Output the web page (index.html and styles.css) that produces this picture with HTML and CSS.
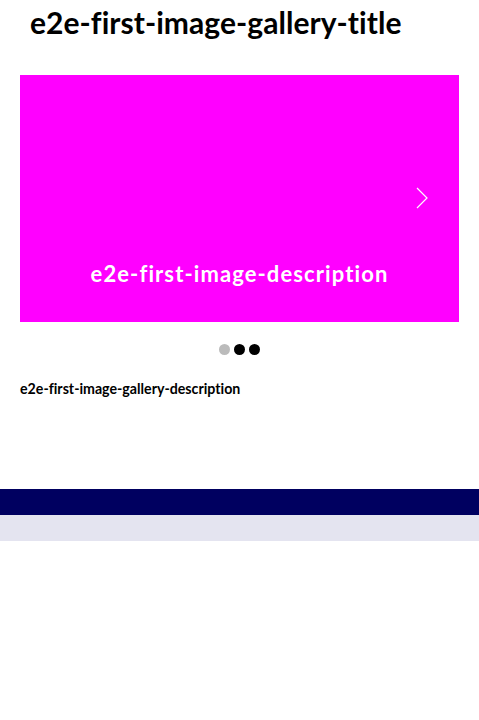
FILE: index.html
```html
<!DOCTYPE html>
<html>
<head>
<meta charset="utf-8">
<link rel="stylesheet" href="styles.css">
</head>
<body>
<main class="gallery">
  <h1 class="gallery-title">e2e-first-image-gallery-title</h1>
  <div class="slider">
    <div class="slide">
      <p class="slide-caption">e2e-first-image-description</p>
      <button class="next" aria-label="Next">
        <svg width="12" height="22" viewBox="0 0 12 22"><path d="M1 1 L11 11 L1 21" fill="none" stroke="#fff" stroke-width="1.2"/></svg>
      </button>
    </div>
  </div>
  <div class="dots">
    <span class="dot dot-active"></span>
    <span class="dot"></span>
    <span class="dot"></span>
  </div>
  <p class="gallery-desc">e2e-first-image-gallery-description</p>
</main>
<footer>
  <div class="bar-dark"></div>
  <div class="bar-light"></div>
</footer>
</body>
</html>
```
FILE: styles.css
```css
* { box-sizing: border-box; }
body {
  margin: 0;
  font-family: Lato, "Open Sans", sans-serif;
  font-variant-ligatures: none;
  color: #000;
  background: #fff;
}
.gallery {
  padding: 0 20px;
}
.gallery-title {
  margin: 0;
  padding: 5px 0 0 10px;
  height: 75px;
  font-size: 30px;
  font-weight: 700;
  line-height: 34px;
  letter-spacing: 0.05px;
}
.slider {
  height: 247px;
}
.slide {
  position: relative;
  height: 100%;
  background: #ff00ff;
  display: flex;
  align-items: flex-end;
  justify-content: center;
}
.slide-caption {
  margin: 0 0 35px;
  color: #fff;
  font-size: 22px;
  font-weight: 700;
  letter-spacing: 1.1px;
}
.next {
  position: absolute;
  right: 31px;
  top: 112px;
  padding: 0;
  border: 0;
  background: none;
  display: flex;
}
.dots {
  display: flex;
  justify-content: center;
  gap: 4px;
  padding-top: 22px;
  height: 57px;
}
.dot {
  width: 11px;
  height: 11px;
  border-radius: 50%;
  background: #000;
}
.dot-active { background: #bbb; }
.gallery-desc {
  margin: 0;
  font-size: 14.2px;
  font-weight: 700;
  line-height: 20px;
  height: 110px;
}
.bar-dark {
  height: 26px;
  background: #000060;
}
.bar-light {
  height: 26px;
  background: #e4e4f0;
}
```
